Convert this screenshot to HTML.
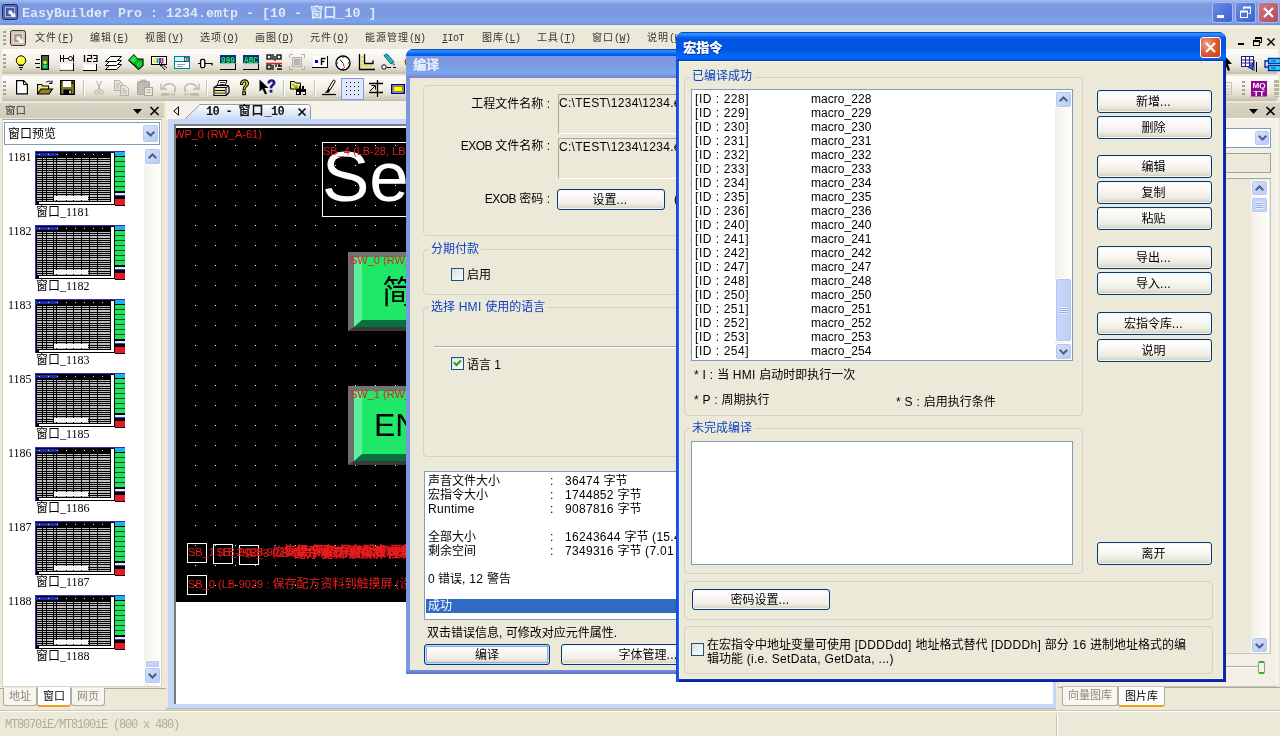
<!DOCTYPE html>
<html lang="zh-CN">
<head>
<meta charset="utf-8">
<title>EasyBuilder Pro : 1234.emtp</title>
<style>
*{box-sizing:border-box;margin:0;padding:0}
html,body{width:1280px;height:736px;overflow:hidden;background:#ECE9D8}
body{will-change:transform;position:relative;font-family:"Liberation Sans","Noto Sans CJK SC",sans-serif;font-size:12px;color:#000;line-height:14px}
.a{position:absolute}
.sim{font-family:"Liberation Serif","Noto Sans CJK SC",serif}
.mono{font-family:"Liberation Mono","Noto Sans CJK SC",monospace}
svg{position:absolute;overflow:visible}
/* ---------- main title ---------- */
#title{left:0;top:0;width:1280px;height:26px;background:linear-gradient(#a3bcf0 0,#93aeec 2px,#7d9ae2 4px,#7b98e1 15px,#7ba2e7 19px,#7aa5e9 22px,#7a90df 24px,#7686d8 26px)}
#title .txt{left:22px;top:5px;font:bold 13.33px/18px "Liberation Mono","Noto Sans CJK SC",monospace;color:#dfe8fa;white-space:pre;letter-spacing:0}
.cap{width:21px;height:21px;border:1px solid #a8bcf0;border-radius:3px;top:2px}
/* ---------- menubar ---------- */
#menu{left:0;top:25px;width:1280px;height:25px;background:#ECE9D8}
#menu span{position:absolute;top:7px;white-space:pre;font:10px/14px "Liberation Mono","Noto Sans CJK SC",monospace;letter-spacing:1px;color:#333}
#menu span i{font-style:normal;letter-spacing:-.5px}
/* ---------- toolbars ---------- */
.tb{left:0;height:25px;background:linear-gradient(#fdfcfa 0,#f4f2ea 40%,#e6e3d5 70%,#d2cfbe 88%,#bebba9 100%);border-radius:0 0 3px 3px}
.grip{width:3px;height:15px;background:repeating-linear-gradient(#a6a392 0,#a6a392 2px,transparent 2px,transparent 4px)}
.sep{width:1px;height:17px;background:#c5c2b2;box-shadow:1px 0 0 #fff}
/* ---------- panels ---------- */
.phead{height:16px;background:linear-gradient(#d9d5c6,#d0ccbb);border-top:1px solid #e6e3d6}
.combo{background:#fff;border:1px solid #7f9db9}
.cbtn{width:17px;background:linear-gradient(135deg,#d9e3fb,#b6c8f5);border:1px solid #fff;border-radius:3px;box-shadow:0 0 0 1px #b7c9f3 inset}
.sbtn{width:17px;height:17px;background:linear-gradient(135deg,#d5e0fb,#b9caf6);border:1px solid #fff;border-radius:3px;box-shadow:0 0 0 1px #b4c6f2 inset}

/* ---------- left panel ---------- */
.th{width:90px;height:54px;background:#000;border-left:1px solid #3030b0;border-top:1px solid #3030b0}
.th .hd{left:0;top:1px;width:74px;height:3px;background:linear-gradient(90deg,#1a2ab0 0,#1a2ab0 22px,#000 22px);}
.th .hd:after{content:"";position:absolute;left:3px;top:1px;width:72px;height:1px;background:repeating-linear-gradient(90deg,#d0d8ff 0,#d0d8ff 1px,transparent 1px,transparent 9px)}
.th .g{left:1px;top:5px;width:73px;height:44px;background:
 linear-gradient(90deg,transparent 5px,#000 5px,#000 6px,transparent 6px,transparent 9px,#000 9px,#000 10px,transparent 10px,transparent 16px,#000 16px,#000 17px,transparent 17px,transparent 19px,#000 19px,#000 20px,transparent 20px,transparent 29px,#000 29px,#000 30px,transparent 30px,transparent 36px,#000 36px,#000 37px,transparent 37px,transparent 44px,#000 44px,#000 45px,transparent 45px,transparent 52px,#000 52px,#000 53px,transparent 53px,transparent 60px,#000 60px,#000 61px,transparent 61px,transparent 73px,#000 73px),
 repeating-linear-gradient(#000 0,#000 1px,#bdbdbd 1px,#bdbdbd 2.200px)}
.th .hl{left:18px;top:44px;width:34px;height:4px;background:#f4f4f4;border:1px solid #fff}
.th .vs{left:75px;top:1px;width:3px;height:51px;background:#fff}
.th .hs{left:3px;top:50px;width:73px;height:2px;background:#fff}
.th .rc{left:79px;top:0;width:10px;height:54px;background:#000}
.th .rc i{position:absolute;left:0;width:10px}
.lnum{left:8px;margin-top:-1px;font:12px/12px "Liberation Serif","Noto Sans CJK SC",serif}
.llab{left:36px;margin-top:-1px;font:12px/13px "Liberation Serif","Noto Sans CJK SC",serif;white-space:pre}

/* ---------- MDI ---------- */
.red{color:#e81c1c;font:11px/13px "Liberation Sans","Noto Sans CJK SC",sans-serif;white-space:pre}
.gbtn{width:80px;height:79px;background:#1fe868;border-style:solid;border-width:5px 0 4px 6px;border-color:#747474 #747474 #3a3a3a #6e6e6e}
.gbtn:before{content:"";position:absolute;left:0;top:0;right:0;bottom:0;border-left:8px solid #5cf09c;border-bottom:7px solid #0a7040}
.red b{font-weight:normal;font-size:12px}
.sbx{width:20px;height:20px;border:1px solid #fff}

/* ---------- dialogs ---------- */
.dlg{background:#ece9d8}
.gb{border:1px solid #d4d2c2;border-radius:4px}
.gl{color:#0a3ec4;background:#ece9d8;padding:0 2px;white-space:pre;font-size:12px;line-height:14px}
.btn{padding:1px 2px 0 0;height:23px;border:1px solid #003c74;border-radius:3px;background:linear-gradient(#fff 0,#f8f7f3 40%,#efede4 72%,#dedacc 90%,#cbc7b8 100%);text-align:center;font-size:12px;line-height:21px;white-space:pre;box-shadow:0 0 0 1px #f4f3ee inset}
.btn.def{box-shadow:0 0 0 1px #c4d9fa inset,0 0 0 2px #8fb0ea inset}
.chk{width:13px;height:13px;border:1px solid #1c5180;background:linear-gradient(135deg,#dcdcd7,#fff)}
.lb{background:#fff;border:1px solid #7f9db9}
.t{white-space:pre;font-size:12px;line-height:14px}
.l{letter-spacing:.3px}
.l.id{letter-spacing:.55px}
.l.m{letter-spacing:.05px}
.sunk{border:1px solid;border-color:#aca899 #fff #fff #aca899;background:#ece9d8}
</style>
</head>
<body>

<!-- ================= MAIN TITLE BAR ================= -->
<div class="a" id="title">
  <svg style="left:2px;top:4px" width="16" height="16" viewBox="0 0 16 16"><rect x=".5" y=".5" width="15" height="15" rx="2" fill="#5a6cb4" stroke="#1a2a6c"/><rect x="3.500" y="3.500" width="9" height="9" fill="#46589e" stroke="#a4b0de"/><path d="M6.500 6.500h3.500v1.500l3.500 2.500v2.500h-3.500l-2-3h-1.500z" fill="#eef1fb"/></svg>
  <div class="a txt">EasyBuilder Pro : 1234.emtp - [10 - 窗口_10 ]</div>
  <div class="a cap" style="left:1212px;background:linear-gradient(135deg,#6a8ce6,#3c62cc)"><i class="a" style="left:4px;top:12px;width:7px;height:3px;background:#fff"></i></div>
  <div class="a cap" style="left:1235px;background:linear-gradient(135deg,#6a8ce6,#3c62cc)">
    <svg style="left:3px;top:3px" width="13" height="13" viewBox="0 0 13 13" fill="none" stroke="#fff"><path d="M4.5 3.5v-2h7v6h-2" stroke-width="1"/><path d="M4 1.5h8" stroke-width="2"/><rect x="1.5" y="5.500" width="7" height="6"/><path d="M1 5.500h8" stroke-width="2"/></svg></div>
  <div class="a cap" style="left:1258px;background:linear-gradient(135deg,#d07888,#b04a60)">
    <svg style="left:4px;top:4px" width="11" height="11" viewBox="0 0 11 11" stroke="#fff" stroke-width="2.2"><path d="M1 1l9 9M10 1l-9 9"/></svg></div>
</div>

<!-- ================= MENU BAR ================= -->
<div class="a" id="menu"><i class="a" style="left:0;top:1px;width:1280px;height:2px;background:#f2f1e6"></i>
  <div class="a grip" style="left:3px;top:6px"></div>
  <svg style="left:10px;top:5px" width="16" height="16" viewBox="0 0 16 16"><rect x=".5" y=".5" width="15" height="15" rx="2" fill="#cdc2b6" stroke="#3e3028"/><rect x="3.500" y="3.500" width="9" height="9" fill="#a89a90" stroke="#e6ded6"/><path d="M6.500 6.500h3.500v1.500l3.500 2.500v2.500h-3.500l-2-3h-1.500z" fill="#f6f2ee"/></svg>
  <span style="left:35px">文件<i>(<u>F</u>)</i></span>
  <span style="left:90px">编辑<i>(<u>E</u>)</i></span>
  <span style="left:145px">视图<i>(<u>V</u>)</i></span>
  <span style="left:200px">选项<i>(<u>O</u>)</i></span>
  <span style="left:255px">画图<i>(<u>D</u>)</i></span>
  <span style="left:310px">元件<i>(<u>O</u>)</i></span>
  <span style="left:365px">能源管理<i>(<u>N</u>)</i></span>
  <span style="left:442px"><i><u>I</u>IoT</i></span>
  <span style="left:482px">图库<i>(<u>L</u>)</i></span>
  <span style="left:537px">工具<i>(<u>T</u>)</i></span>
  <span style="left:592px">窗口<i>(<u>W</u>)</i></span>
  <span style="left:647px">说明<i>(<u>H</u>)</i></span>
  <!-- MDI child controls -->
  <i class="a" style="left:1238px;top:18px;width:6px;height:2px;background:#000"></i>
  <svg style="left:1253px;top:12px" width="9" height="9" viewBox="0 0 9 9" fill="none" stroke="#000"><path d="M2.500 2.500v-2h6v5h-2"/><path d="M2 1h7" stroke-width="2"/><rect x=".5" y="3.500" width="6" height="5"/><path d="M0 4h7" stroke-width="2"/></svg>
  <svg style="left:1267px;top:13px" width="8" height="8" viewBox="0 0 8 8" stroke="#000" stroke-width="1.500"><path d="M.5.5l7 7M7.500.5l-7 7"/></svg>
</div>

<!-- ================= TOOLBAR 1 ================= -->
<div class="a tb" id="tb1" style="top:49px;width:1278px">
  <div class="a grip" style="left:3px;top:5px"></div>
  <!-- bulb -->
  <svg style="left:13px;top:6px" width="16" height="16" viewBox="0 0 16 16"><circle cx="8" cy="5.500" r="4.700" fill="#ffff30" stroke="#000" stroke-width="1"/><path d="M5.500 10.500h5M6 12.500h4M7 14.300h2" stroke="#000" fill="none"/><circle cx="6.500" cy="4" r="1.300" fill="#ffffc0"/></svg>
  <!-- traffic -->
  <svg style="left:35px;top:6px" width="16" height="16" viewBox="0 0 16 16"><rect x="6.500" y=".5" width="7" height="14" fill="#008040" stroke="#000"/><circle cx="10" cy="3.500" r="1.800" fill="#e02010"/><circle cx="10" cy="7.500" r="1.800" fill="#ffe020"/><circle cx="10" cy="11.500" r="1.800" fill="#30e060"/><path d="M1 4.500h4M0 8.500h5M1 12.500h4" stroke="#000"/></svg>
  <!-- HHO -->
  <svg style="left:59px;top:6px" width="16" height="16" viewBox="0 0 16 16"><path d="M1.500 8.500v7h13v-7" fill="#fff" stroke="none"/><path d="M1 15.500h14M14.500 8v8" stroke="#000"/><path d="M2 15h12" stroke="#c8c4b4" /><path d="M1.500 0v7M4.500 0v7M1.500 3.500h12M9 1.500h0" stroke="#000" fill="none"/><circle cx="11.500" cy="3.500" r="2" fill="#fff" stroke="#000"/><path d="M14.500 0v7" stroke="#000"/></svg>
  <!-- 123 -->
  <svg style="left:82px;top:6px" width="16" height="16" viewBox="0 0 16 16"><path d="M1.500 9.500v6h13v-6" fill="#fff"/><path d="M1 15.500h14M14.500 9v7" stroke="#000"/><path d="M2.500 0v7" stroke="#000" stroke-width="1.300"/><path d="M5.500 .5h4v3h-4v3h4M11 .5h4v6h-4M12 3.500h3" stroke="#000" fill="none" stroke-width="1.200"/></svg>
  <!-- layers -->
  <svg style="left:105px;top:6px" width="17" height="16" viewBox="0 0 17 16" fill="#fff" stroke="#000" stroke-width="1"><path d="M5.500 9.500h11l-5 5H.5z"/><path d="M5.500 5.500h11l-5 5H.5z"/><path d="M5.500 1.500h11l-5 5H.5z"/></svg>
  <!-- green box -->
  <svg style="left:128px;top:5px" width="17" height="17" viewBox="0 0 17 17"><path d="M.8 6.200L5.800 .8l3.500 4 5.700 .4v6.200l-4.400 4z" fill="#08d828" stroke="#000" stroke-width="1.200" stroke-linejoin="round"/><path d="M9.300 4.800L6.300 9M6.300 9l4.400 6M6.300 9l8.500-3.500" stroke="#067a18" stroke-width=".9" fill="none"/><path d="M.8 6.200L5.800 .8l3.500 4-3 4.200z" fill="#30f050" stroke="none" opacity=".7"/></svg>
  <!-- palette -->
  <svg style="left:151px;top:6px" width="17" height="16" viewBox="0 0 17 16"><rect x=".5" y="1.500" width="15" height="8" fill="#fff" stroke="#000"/><rect x="2" y="3" width="3" height="5" fill="#f0f060"/><rect x="5.500" y="3" width="2" height="5" fill="#40a040"/><rect x="8" y="3" width="2" height="5" fill="#4040d0"/><rect x="10.500" y="3" width="2" height="5" fill="#d03030"/><path d="M8 8l6 7M10 8l6 5M9 11l5-2" stroke="#000" fill="none"/></svg>
  <!-- window -->
  <svg style="left:174px;top:6px" width="17" height="16" viewBox="0 0 17 16"><rect x=".5" y="1.500" width="15" height="12" fill="#fff" stroke="#0080a0"/><path d="M1 6.500h15" stroke="#0080a0"/><rect x="1" y="2" width="9" height="4" fill="#d8f0f8"/><rect x="10.500" y="2.500" width="4" height="3.500" fill="#fff" stroke="#000" stroke-width=".6"/><path d="M11.500 3.500h2.500l-1.250 1.800z" fill="#000"/><path d="M3 9.500h8M3 11.500h6" stroke="#80a8b8"/></svg>
  <!-- dumbbell -->
  <svg style="left:197px;top:6px" width="17" height="16" viewBox="0 0 17 16"><path d="M1 8.500h2.500M8 8.500h7.500M15 8v2.500" stroke="#000" stroke-width="1.200"/><rect x="3.600" y="4.300" width="4.200" height="8.400" rx="1.500" fill="#fff" stroke="#000" stroke-width="1.300"/></svg>
  <!-- 999 -->
  <svg style="left:220px;top:5px" width="17" height="17" viewBox="0 0 17 17"><rect x="0" y="1" width="16" height="8.500" fill="#0030b0"/><rect x="1" y="2" width="14" height="7" fill="#003858"/><text x="8" y="8.500" font-family="Liberation Mono,monospace" font-weight="bold" font-size="9" fill="#28e860" text-anchor="middle" textLength="14" lengthAdjust="spacingAndGlyphs">999</text><rect x="0" y="9.500" width="16" height="6" fill="#dedcd2"/><path d="M0 15.500h16M15.500 9.500v6.500" stroke="#000"/></svg>
  <!-- ABC -->
  <svg style="left:243px;top:5px" width="17" height="17" viewBox="0 0 17 17"><rect x="0" y="1" width="16" height="8.500" fill="#0030b0"/><rect x="1" y="2" width="14" height="7" fill="#003858"/><text x="8" y="8.500" font-family="Liberation Mono,monospace" font-weight="bold" font-size="9" fill="#28e860" text-anchor="middle" textLength="14" lengthAdjust="spacingAndGlyphs">ABC</text><rect x="0" y="9.500" width="16" height="6" fill="#dedcd2"/><path d="M0 15.500h16M15.500 9.500v6.500" stroke="#000"/></svg>
  <!-- barcode -->
  <svg style="left:266px;top:5px" width="17" height="17" viewBox="0 0 17 17"><g fill="none" stroke="#000" stroke-width="1.300"><rect x="1" y="1" width="4" height="4"/><rect x="11" y="1" width="4" height="4"/><rect x="1" y="11" width="4" height="4"/><path d="M7 0v6M9 2v5M7 11v5M10 10v3M12 12h4M11 15h5M13 9v3"/></g><path d="M0 9.500h16" stroke="#e02020" stroke-width="1.600"/></svg>
  <!-- gray frame -->
  <svg style="left:289px;top:5px" width="17" height="17" viewBox="0 0 17 17" fill="none" stroke="#b0b0a8"><path d="M.5 4V.5H4M12 .5h3.500V4M15.500 12v3.500H12M4 15.500H.5V12"/><rect x="3.500" y="3.500" width="9" height="9" fill="#e0e0d8"/><rect x="5.500" y="5.500" width="5" height="5" fill="#b8b8b0"/></svg>
  <!-- .F -->
  <svg style="left:312px;top:6px" width="17" height="16" viewBox="0 0 17 16"><rect x="1" y="1" width="14" height="11" fill="#fff"/><path d="M0 12.500h16M15.500 1v12" stroke="#000"/><rect x="3" y="5" width="3" height="3" fill="#0000e0"/><path d="M9.500 10V3.500h4M9.500 6.500h3" stroke="#000" stroke-width="1.400" fill="none"/></svg>
  <!-- clock -->
  <svg style="left:335px;top:6px" width="16" height="16" viewBox="0 0 16 16"><circle cx="8" cy="8" r="7" fill="#fff" stroke="#000" stroke-width="1.300"/><path d="M8 2v1M8 13v1M2 8h1M13 8h1" stroke="#000"/><path d="M8 8L5 4.500" stroke="#000"/><path d="M8 8l1.500 5" stroke="#e02020"/></svg>
  <!-- L chart -->
  <svg style="left:358px;top:5px" width="17" height="17" viewBox="0 0 17 17"><path d="M1.500 0v15.500H17M6.500 0v9.500H15v-3" stroke="#000" fill="none" stroke-width="1.300"/><g fill="#e0e020"><rect x="3" y="2" width="2.500" height="2.500"/><rect x="3" y="6" width="2.500" height="2.500"/><rect x="3" y="10" width="2.500" height="2.500"/><rect x="7" y="11" width="2.500" height="2.500"/><rect x="11" y="11" width="2.500" height="2.500"/></g></svg>
  <!-- pen -->
  <svg style="left:381px;top:5px" width="17" height="17" viewBox="0 0 17 17"><path d="M3 1.500l3-1.500 7 8-3 2z" fill="#20c0c0" stroke="#006080"/><path d="M11 9l3 1-1 2z" fill="#4060e0"/><circle cx="3" cy="13" r="2.200" fill="#fff" stroke="#000"/><path d="M6 13.500h4M12 13.500h3" stroke="#000"/></svg>
  <svg style="left:404px;top:8px" width="10" height="10" viewBox="0 0 10 10"><circle cx="5" cy="5" r="4" fill="#ffb020" stroke="#804000"/></svg>
  <!-- right side (past macro dialog) -->
  <svg style="left:1219px;top:7px" width="14" height="16" viewBox="0 0 14 16"><path d="M6 0l7 8h-4l2 6-2 1-2.500-6-3 3z" fill="#000"/></svg>
  <svg style="left:1241px;top:7px" width="17" height="17" viewBox="0 0 17 17"><rect x=".5" y=".5" width="12" height="10" fill="#fff" stroke="#202080"/><path d="M1 4h11M1 7h11M4.500 1v9M8.500 1v9" stroke="#202080"/><path d="M13 4v11M12 14l-5-3 5-4z" fill="#4060d0" stroke="#202080"/><path d="M15.500 6v10" stroke="#000"/></svg>
  <svg style="left:1264px;top:8px" width="18" height="16" viewBox="0 0 18 16"><rect x="4.500" y="1.500" width="12" height="5" fill="#30e0e0" stroke="#0030c0" stroke-width="1.400"/><rect x="4.500" y="8.500" width="12" height="5" fill="#30e0e0" stroke="#0030c0" stroke-width="1.400"/><path d="M1 3v8M1 4h4M1 10h4" stroke="#0030c0" stroke-width="1.400" fill="none"/><path d="M7 4h5M7 11h5" stroke="#0030c0"/></svg>
</div>
<!-- ================= TOOLBAR 2 ================= -->
<div class="a tb" id="tb2" style="top:76px;width:1278px">
  <div class="a grip" style="left:3px;top:5px"></div>
  <!-- new -->
  <svg style="left:16px;top:4px" width="12" height="15" viewBox="0 0 12 15"><path d="M.6 .6h7l3.800 3.800v9.500H.6z" fill="#fff" stroke="#000" stroke-width="1.200"/><path d="M7.500 .6v4h4" fill="none" stroke="#000"/></svg>
  <!-- open -->
  <svg style="left:37px;top:4px" width="17" height="15" viewBox="0 0 17 15"><path d="M.6 14V4.500h4l1 1.500h6v3" fill="#f0e890" stroke="#000" stroke-width="1.100"/><path d="M.6 14l3.400-5h11.500l-3.500 5z" fill="#908820" stroke="#000" stroke-width="1.100"/><path d="M9 2.500c2-2 4.500-1.500 5.500 .5M15 0.500v3h-3" fill="none" stroke="#000"/></svg>
  <!-- save -->
  <svg style="left:60px;top:4px" width="15" height="15" viewBox="0 0 15 15"><rect x=".6" y=".6" width="13.800" height="13.800" fill="#807820" stroke="#000" stroke-width="1.200"/><rect x="3" y="1" width="8" height="6" fill="#fff"/><rect x="3.500" y="9.500" width="8" height="5" fill="#000"/><rect x="9" y="10.500" width="2" height="3" fill="#c0c0c0"/><rect x="11.500" y="2" width="1.500" height="2" fill="#000"/></svg>
  <div class="a sep" style="left:83px;top:4px"></div>
  <!-- cut -->
  <svg style="left:94px;top:5px" width="10" height="14" viewBox="0 0 10 14" fill="none" stroke="#b4b1a4" stroke-width="1"><path d="M2.500 0l4 9.500M7.500 0l-4 9.500"/><circle cx="2.500" cy="11.300" r="1.900"/><circle cx="7.500" cy="11.300" r="1.900"/></svg>
  <!-- copy -->
  <svg style="left:114px;top:4px" width="16" height="16" viewBox="0 0 16 16" fill="#e8e6da" stroke="#b4b1a4"><path d="M.5 .5h5l2.500 2.500v7.500h-7.500z"/><path d="M6.500 5.500h5l3 3v7h-8z"/><path d="M2 4h4M2 6h3M2 8h3M8 9h3M8 11h5M8 13h5" stroke-width=".9"/></svg>
  <!-- paste -->
  <svg style="left:137px;top:3px" width="16" height="17" viewBox="0 0 16 17"><rect x=".5" y="2.500" width="12" height="13" rx="1" fill="#c0bdb0" stroke="#aaa79a"/><rect x="3.500" y=".5" width="6" height="4" rx="1" fill="#b4b1a4"/><rect x="7.500" y="8.500" width="8" height="8" fill="#ece9d8" stroke="#aaa79a"/><path d="M9 11h5M9 13.500h5" stroke="#b4b1a4"/></svg>
  <!-- undo -->
  <svg style="left:160px;top:5px" width="17" height="15" viewBox="0 0 17 15" fill="none" stroke="#b8b5a8" stroke-width="1.300"><path d="M3 7c2-5 9-6 12-1 1 2 0 4-1 5"/><path d="M1 2.500v5.500h5.500"/><path d="M1 13.300h8.500M11 13.300h1.500M13.500 13.300h1.500" stroke-width="2.200"/></svg>
  <!-- redo -->
  <svg style="left:183px;top:5px" width="17" height="15" viewBox="0 0 17 15" fill="none" stroke="#b8b5a8" stroke-width="1.300"><path d="M14 7c-2-5-9-6-12-1-1 2 0 4 1 5"/><path d="M16 2.500v5.500h-5.500"/><path d="M7 13.300h9M1.500 13.300h1.500M4 13.300h1.500" stroke-width="2.200"/></svg>
  <div class="a sep" style="left:206px;top:4px"></div>
  <!-- print -->
  <svg style="left:213px;top:4px" width="17" height="16" viewBox="0 0 17 16"><path d="M4 6l2-5.500h8l-2 5.500z" fill="#fff" stroke="#000"/><path d="M7 2.500h5M6.500 4.500h5" stroke="#000" stroke-width=".8"/><path d="M1 7.500l3-2h11l1 2v5l-3 3H1z" fill="#e8e8e8" stroke="#000" stroke-width="1.200"/><path d="M1 7.500h12l3-1.500M13 7.500v8" stroke="#000" fill="none"/><path d="M2 10.500h10M2 13h10" stroke="#000"/><rect x="3" y="11" width="8" height="1.500" fill="#f0f040"/></svg>
  <!-- ? -->
  <svg style="left:239px;top:3px" width="11" height="17" viewBox="0 0 11 17"><path d="M1.500 5.500c0-6 8-6 8-1 0 3-3.500 3-3.500 6.500h-2c0-4.500 3-4.500 3-6.500 0-2.500-3.500-2-3.500 1z" fill="#ffff20" stroke="#000" stroke-width="1.100"/><rect x="3.800" y="12.800" width="2.600" height="2.800" fill="#ffff20" stroke="#000" stroke-width="1.100"/></svg>
  <!-- arrow? -->
  <svg style="left:259px;top:3px" width="17" height="17" viewBox="0 0 17 17"><path d="M.5 .5v12l3-2.500 2.500 5.500 2-1-2.500-5.500h4z" fill="#000"/><path d="M8.300 4.500c0-5.500 8.200-5.500 8.200-.8 0 3-3.200 2.800-3.200 5.600h-2.600c0-4 3-3.800 3-5.600 0-1.600-2.600-1.400-2.600 .8z" fill="#1c1c88"/><rect x="10.600" y="10.800" width="2.800" height="2.800" fill="#1c1c88"/></svg>
  <div class="a sep" style="left:283px;top:4px"></div>
  <!-- binoculars -->
  <svg style="left:290px;top:4px" width="17" height="17" viewBox="0 0 17 17"><path d="M.5 1.500h4l1 1.500h5v6H.5z" fill="#f0e860" stroke="#000"/><path d="M2 4l5 4M7 5v3H4" stroke="#808020" fill="none"/><path d="M6 9h3v-3h2v3h1v-3h2v3h2v6h-3v-3h-2v3H6z" fill="#000"/><rect x="7" y="12" width="2" height="2" fill="#fff"/><rect x="13" y="12" width="2" height="2" fill="#fff"/></svg>
  <div class="a sep" style="left:314px;top:4px"></div>
  <!-- brush -->
  <svg style="left:322px;top:4px" width="16" height="16" viewBox="0 0 16 16"><path d="M0 14.500h14" stroke="#000" stroke-width="1.300"/><path d="M11 .5c1-1 2.500 0 2 1.500l-5 8-2-1z" fill="#fff" stroke="#000"/><path d="M6 9l2 1-1 2.500-4 .5z" fill="#000"/></svg>
  <!-- grid toggle -->
  <div class="a" style="left:341px;top:2px;width:23px;height:22px;background:#dfe6f8;border:1px solid #7f9ddc"></div>
  <div class="a" style="left:346px;top:6px;width:14px;height:14px;background:radial-gradient(circle at .5px .5px,#000 .6px,transparent .95px) 0 0/4px 4px"></div>
  <!-- align -->
  <svg style="left:368px;top:4px" width="16" height="17" viewBox="0 0 16 17" fill="none" stroke="#000"><path d="M1 3.500h14M1 12.500h14M9.500 0v17" stroke-width="1.300"/><path d="M2 11l5-5M3.500 5.500h4v4"/></svg>
  <!-- yellow rect -->
  <svg style="left:391px;top:8px" width="14" height="10" viewBox="0 0 16 12" preserveAspectRatio="none"><rect x=".8" y=".8" width="14.400" height="10.400" fill="#c8c8c8" stroke="#000080" stroke-width="1.600"/><rect x="3" y="3" width="10" height="6" fill="#ffff00" stroke="#808000"/></svg>
  <!-- right side -->
  <svg style="left:1222px;top:6px" width="12" height="14" viewBox="0 0 12 14" fill="none" stroke="#c4c1b2"><rect x=".5" y=".5" width="9" height="12"/><path d="M2 4h6M2 7h6M2 10h6"/></svg>
  <div class="a grip" style="left:1242px;top:5px"></div>
  <svg style="left:1251px;top:5px" width="17" height="16" viewBox="0 0 17 16"><rect x="0" y="0" width="16" height="15.500" fill="#900890"/><text x="8" y="7" font-family="Liberation Sans,sans-serif" font-weight="bold" font-size="7.500" fill="#fff" text-anchor="middle" textLength="13" lengthAdjust="spacingAndGlyphs">MQ</text><text x="8" y="14.500" font-family="Liberation Sans,sans-serif" font-weight="bold" font-size="7.500" fill="#fff" text-anchor="middle" textLength="11" lengthAdjust="spacingAndGlyphs">TT</text></svg>
  <div class="a" style="left:1274px;top:4px;width:5px;height:17px;background:repeating-linear-gradient(#b8b4a0 0,#b8b4a0 3px,transparent 3px,transparent 4px)"></div>
</div>

<i class="a" style="left:0;top:49px;width:2px;height:53px;background:#ECE9D8"></i>
<!-- ================= LEFT PANEL ================= -->
<div class="a" id="left" style="left:0;top:101px;width:166px;height:609px">
  <div class="a phead" style="left:0;top:1px;width:164px"><span class="a sim" style="left:5px;top:2px;font-size:10.500px;line-height:12px;color:#333">窗口</span>
    <svg style="left:133px;top:6px" width="9" height="5" viewBox="0 0 9 5"><path d="M0 0h9L4.500 5z" fill="#000"/></svg>
    <svg style="left:150px;top:4px" width="9" height="8" viewBox="0 0 9 8" stroke="#000" stroke-width="1.600"><path d="M.5 0l8 8M8.500 0l-8 8"/></svg></div>
  <div class="a" style="left:2px;top:18px;width:160px;height:568px;background:#fff;border:1px solid #d8d4c4;border-top-color:#aca899"></div>
  <div class="a combo" style="left:4px;top:21px;width:156px;height:23px"><span class="a sim" style="left:3px;top:4px;font-size:12px;line-height:14px">窗口预览</span><div class="a cbtn" style="left:137px;top:1px;height:19px"><svg style="left:3px;top:6px" width="9" height="6" viewBox="0 0 9 6" fill="none" stroke="#4d6185" stroke-width="2"><path d="M.7 .7l3.800 3.800L8.300 .7"/></svg></div></div>
  <div class="a" style="left:144px;top:47px;width:17px;height:538px;background:linear-gradient(90deg,#f3f1ec,#fefefb)"></div>
  <div class="a sbtn" style="left:144px;top:47px"><svg style="left:3px;top:4px" width="9" height="6" viewBox="0 0 9 6" fill="none" stroke="#4d6185" stroke-width="2"><path d="M.7 5.300L4.500 1.500 8.300 5.300"/></svg></div>
  <div class="a" style="left:145px;top:559px;width:15px;height:8px;background:#c3d3fb;border:1px solid #fff;border-radius:2px;box-shadow:0 0 0 1px #b4c6f2 inset"></div>
  <div class="a sbtn" style="left:144px;top:566px"><svg style="left:3px;top:5px" width="9" height="6" viewBox="0 0 9 6" fill="none" stroke="#4d6185" stroke-width="2"><path d="M.7 .7l3.800 3.800L8.300 .7"/></svg></div>
  <div class="a lnum" style="top:51px">1181</div>
  <div class="a th" style="left:35px;top:50px"><i class="a hd"></i><i class="a g"></i><i class="a hl"></i><i class="a vs"></i><i class="a hs"></i><div class="a rc"><i style="top:0;height:4px;background:#20b0e8"></i><i style="top:5px;height:34px;background:repeating-linear-gradient(#20e060 0,#20e060 4px,#0a5020 4px,#0a5020 5px)"></i><i style="top:41px;height:3px;background:#e8e8ff;border-bottom:1px solid #3040c0"></i><i style="top:47px;height:6px;background:#e81828"></i></div></div>
  <div class="a llab" style="top:106px">窗口_1181</div>
  <div class="a lnum" style="top:125px">1182</div>
  <div class="a th" style="left:35px;top:124px"><i class="a hd"></i><i class="a g"></i><i class="a hl"></i><i class="a vs"></i><i class="a hs"></i><div class="a rc"><i style="top:0;height:4px;background:#20b0e8"></i><i style="top:5px;height:34px;background:repeating-linear-gradient(#20e060 0,#20e060 4px,#0a5020 4px,#0a5020 5px)"></i><i style="top:41px;height:3px;background:#e8e8ff;border-bottom:1px solid #3040c0"></i><i style="top:47px;height:6px;background:#e81828"></i></div></div>
  <div class="a llab" style="top:180px">窗口_1182</div>
  <div class="a lnum" style="top:199px">1183</div>
  <div class="a th" style="left:35px;top:198px"><i class="a hd"></i><i class="a g"></i><i class="a hl"></i><i class="a vs"></i><i class="a hs"></i><div class="a rc"><i style="top:0;height:4px;background:#20b0e8"></i><i style="top:5px;height:34px;background:repeating-linear-gradient(#20e060 0,#20e060 4px,#0a5020 4px,#0a5020 5px)"></i><i style="top:41px;height:3px;background:#e8e8ff;border-bottom:1px solid #3040c0"></i><i style="top:47px;height:6px;background:#e81828"></i></div></div>
  <div class="a llab" style="top:254px">窗口_1183</div>
  <div class="a lnum" style="top:273px">1185</div>
  <div class="a th" style="left:35px;top:272px"><i class="a hd"></i><i class="a g"></i><i class="a hl"></i><i class="a vs"></i><i class="a hs"></i><div class="a rc"><i style="top:0;height:4px;background:#20b0e8"></i><i style="top:5px;height:34px;background:repeating-linear-gradient(#20e060 0,#20e060 4px,#0a5020 4px,#0a5020 5px)"></i><i style="top:41px;height:3px;background:#e8e8ff;border-bottom:1px solid #3040c0"></i><i style="top:47px;height:6px;background:#e81828"></i></div></div>
  <div class="a llab" style="top:328px">窗口_1185</div>
  <div class="a lnum" style="top:347px">1186</div>
  <div class="a th" style="left:35px;top:346px"><i class="a hd"></i><i class="a g"></i><i class="a hl"></i><i class="a vs"></i><i class="a hs"></i><div class="a rc"><i style="top:0;height:4px;background:#20b0e8"></i><i style="top:5px;height:34px;background:repeating-linear-gradient(#20e060 0,#20e060 4px,#0a5020 4px,#0a5020 5px)"></i><i style="top:41px;height:3px;background:#e8e8ff;border-bottom:1px solid #3040c0"></i><i style="top:47px;height:6px;background:#e81828"></i></div></div>
  <div class="a llab" style="top:402px">窗口_1186</div>
  <div class="a lnum" style="top:421px">1187</div>
  <div class="a th" style="left:35px;top:420px"><i class="a hd"></i><i class="a g"></i><i class="a hl"></i><i class="a vs"></i><i class="a hs"></i><div class="a rc"><i style="top:0;height:4px;background:#20b0e8"></i><i style="top:5px;height:34px;background:repeating-linear-gradient(#20e060 0,#20e060 4px,#0a5020 4px,#0a5020 5px)"></i><i style="top:41px;height:3px;background:#e8e8ff;border-bottom:1px solid #3040c0"></i><i style="top:47px;height:6px;background:#e81828"></i></div></div>
  <div class="a llab" style="top:476px">窗口_1187</div>
  <div class="a lnum" style="top:495px">1188</div>
  <div class="a th" style="left:35px;top:494px"><i class="a hd"></i><i class="a g"></i><i class="a hl"></i><i class="a vs"></i><i class="a hs"></i><div class="a rc"><i style="top:0;height:4px;background:#20b0e8"></i><i style="top:5px;height:34px;background:repeating-linear-gradient(#20e060 0,#20e060 4px,#0a5020 4px,#0a5020 5px)"></i><i style="top:41px;height:3px;background:#e8e8ff;border-bottom:1px solid #3040c0"></i><i style="top:47px;height:6px;background:#e81828"></i></div></div>
  <div class="a llab" style="top:550px">窗口_1188</div>
  <div class="a" style="left:0;top:587px;width:166px;height:1px;background:#aca899"></div>
  <div class="a sim" style="left:3px;top:587px;width:34px;height:18px;background:#f6f5ef;border:1px solid #b0ad9c;border-top:0;border-radius:0 0 3px 3px;font-size:11px;line-height:16px;text-align:center;color:#8a8778">地址</div>
  <div class="a sim" style="left:37px;top:586px;width:34px;height:20px;background:#fff;border:1px solid #b0ad9c;border-top:0;border-bottom:2px solid #f0a020;border-radius:0 0 3px 3px;font-size:11px;line-height:18px;text-align:center;color:#000">窗口</div>
  <div class="a sim" style="left:71px;top:587px;width:34px;height:18px;background:#f6f5ef;border:1px solid #b0ad9c;border-top:0;border-radius:0 0 3px 3px;font-size:11px;line-height:16px;text-align:center;color:#8a8778">网页</div>
</div>

<!-- ================= MDI AREA ================= -->
<div class="a" id="mdi" style="left:166px;top:101px;width:892px;height:609px">
  <div class="a" style="left:0;top:0;width:892px;height:19px;background:#f4f2ea"></div>
  <svg style="left:7px;top:5px" width="6" height="10" viewBox="0 0 6 10"><path d="M5.500 .8v8.400L.8 5z" fill="none" stroke="#000"/></svg>
  <!-- tab -->
  <div class="a" style="left:18px;top:3px;width:127px;height:16px;background:linear-gradient(#fff,#c8d8f6);clip-path:polygon(0 100%,16px 0,124px 0,127px 3px,127px 100%)"></div>
  <svg style="left:18px;top:3px" width="130" height="16" viewBox="0 0 130 16"><path d="M0 16L16 .5h107.500q3 0 3 3V16" fill="none" stroke="#9a9a9a" stroke-width="1"/></svg>
  <div class="a mono" style="left:40px;top:4px;font-size:12px;line-height:14px;font-weight:bold;white-space:pre;color:#111"><span style="letter-spacing:-.7px">10 - </span><span style="letter-spacing:1px">窗口</span><span style="letter-spacing:-.7px">_10</span></div>
  <svg style="left:132px;top:7px" width="8" height="8" viewBox="0 0 8 8" stroke="#000" stroke-width="1.500"><path d="M.5 .5l7 7M7.500 .5l-7 7"/></svg>
  <!-- frame -->
  <div class="a" style="left:2px;top:18px;width:888px;height:589px;background:#fff;border:6px solid #c6d6f6;border-right-width:4px;border-bottom-width:4px;box-shadow:0 0 0 1px #dfe8fb inset"></div>
  <div class="a" style="left:8px;top:23px;width:879px;height:580px;border-left:2px solid #7c7c7c;border-top:2px solid #7c7c7c;background:#fff"></div>
  <!-- canvas -->
  <div class="a" id="cv" style="left:10px;top:27px;width:800px;height:474px;background:#000;overflow:hidden">
    <div class="a" style="left:0;top:0;width:800px;height:476px;background:radial-gradient(circle at .5px .5px,#fff .55px,transparent .9px) 19px -3px/20px 20px"></div>
    <div class="a red" style="left:-2px;top:0">WP_0 (RW_A-61)</div>
    <div class="a" style="left:146px;top:14px;width:300px;height:75px;border:1px solid #fff"></div>
    <div class="a" style="left:146px;top:9px;font:71px/80px 'Liberation Sans',sans-serif;color:#fff;white-space:pre">Setting</div>
    <div class="a red" style="left:147px;top:17px">SB_4 (LB-28, LB-29)</div>
    <div class="a gbtn" style="left:172px;top:124px;width:180px"><span class="a" style="left:28px;top:13px;font:32px/44px 'Liberation Sans','Noto Sans CJK SC',sans-serif;white-space:pre">简体</span></div>
    <div class="a red" style="left:174px;top:126px">SW_0 (RW_A-0)</div>
    <div class="a gbtn" style="left:172px;top:258px;width:180px"><span class="a" style="left:20px;top:12px;font:32px/44px 'Liberation Sans',sans-serif;white-space:pre">ENG</span></div>
    <div class="a red" style="left:174px;top:260px">SW_1 (RW_A-0)</div>
    <div class="a sbx" style="left:11px;top:415px"></div>
    <div class="a sbx" style="left:37px;top:416px"></div>
    <div class="a sbx" style="left:63px;top:417px"></div>
    <div class="a sbx" style="left:11px;top:447px"></div>
    <div class="a red" style="left:12px;top:418px">SB_1 (LB-9028 : <b>恢复出厂配方资料</b> (<b>设</b>ON))</div>
    <div class="a red" style="left:40px;top:418px">SB_2 (LB-9030 : <b>更新配方资料到触摸屏</b> (<b>设</b>ON))</div>
    <div class="a red" style="left:66px;top:419px">SB_3 (LB-9031 : <b>保存配方资料到控制器</b> (<b>设</b>ON))</div>
    <div class="a red" style="left:108px;top:417px;font-size:12px;font-weight:bold">恢复 保存 保存配方 更新配方资料 触摸</div>
    <div class="a red" style="left:118px;top:420px;font-size:12px;font-weight:bold">配方 更新 触摸屏 控制器 保存资料 配方</div>
    <div class="a red" style="left:12px;top:450px">SB_0 (LB-9029 : <b>保存配方资料到触摸屏</b> (<b>设</b>ON))</div>
  </div>
</div>

<!-- ================= RIGHT PANEL ================= -->
<div class="a" id="right" style="left:1058px;top:101px;width:222px;height:609px">
  <div class="a phead" style="left:0;top:1px;width:222px">
    <svg style="left:191px;top:6px" width="9" height="5" viewBox="0 0 9 5"><path d="M0 0h9L4.500 5z" fill="#000"/></svg>
    <svg style="left:208px;top:4px" width="9" height="8" viewBox="0 0 9 8" stroke="#000" stroke-width="1.600"><path d="M.5 0l8 8M8.500 0l-8 8"/></svg></div>
  <div class="a" style="left:2px;top:17px;width:218px;height:569px;background:#f1efe6;border:1px solid #fbfaf6;border-bottom-color:#c9c6b6"></div>
  <div class="a combo" style="left:8px;top:27px;width:205px;height:20px"><div class="a cbtn" style="left:187px;top:1px;height:16px;width:16px"><svg style="left:3px;top:4px" width="9" height="6" viewBox="0 0 9 6" fill="none" stroke="#4d6185" stroke-width="2"><path d="M.7 .7l3.800 3.800L8.300 .7"/></svg></div></div>
  <div class="a" style="left:8px;top:52px;width:205px;height:20px;background:#ece9d8;border:1px solid #a5a294"></div>
  <div class="a" style="left:8px;top:77px;width:205px;height:476px;background:#ece9d8;border:1px solid #c9c6b6;border-top-color:#aaa799"></div>
  <div class="a" style="left:193px;top:79px;width:18px;height:473px;background:linear-gradient(90deg,#f1efe8,#fefefc)"></div>
  <div class="a sbtn" style="left:193px;top:79px;height:16px"><svg style="left:3px;top:4px" width="9" height="6" viewBox="0 0 9 6" fill="none" stroke="#4d6185" stroke-width="2"><path d="M.7 5.300L4.500 1.500 8.300 5.300"/></svg></div>
  <div class="a sbtn" style="left:193px;top:96px;height:16px;background:#c4d4fb"><i class="a" style="left:4px;top:4px;width:7px;height:7px;background:repeating-linear-gradient(#eef3ff 0,#eef3ff 1px,#8da7e8 1px,#8da7e8 2px)"></i></div>
  <div class="a sbtn" style="left:193px;top:536px;height:16px"><svg style="left:3px;top:5px" width="9" height="6" viewBox="0 0 9 6" fill="none" stroke="#4d6185" stroke-width="2"><path d="M.7 .7l3.800 3.800L8.300 .7"/></svg></div>
  <div class="a" style="left:100px;top:565px;width:106px;height:2px;background:#aaa799;border-bottom:1px solid #fff"></div>
  <div class="a" style="left:200px;top:560px;width:7px;height:13px;background:#f4f4ee;border:1px solid #8aa08a;border-top:2px solid #28b428;border-bottom:2px solid #28b428;border-radius:2px"></div>
  <div class="a" style="left:0;top:586px;width:222px;height:1px;background:#aca899"></div>
  <div class="a sim" style="left:4px;top:586px;width:56px;height:19px;background:#f8f7f2;border:1px solid #b0ad9c;border-top:0;border-radius:0 0 3px 3px;font-size:11px;line-height:17px;text-align:center;color:#8a8778">向量图库</div>
  <div class="a sim" style="left:60px;top:586px;width:47px;height:20px;background:#fff;border:1px solid #b0ad9c;border-top:0;border-bottom:2px solid #f0a020;border-radius:0 0 3px 3px;font-size:11px;line-height:18px;text-align:center;color:#000">图片库</div>
</div>

<i class="a" style="left:166px;top:708px;width:890px;height:2px;background:linear-gradient(#b9b7a9,#d8d5c6)"></i>
<!-- ================= STATUS BAR ================= -->
<div class="a" id="status" style="left:0;top:710px;width:1280px;height:26px;border-top:1px solid #c9c6b6;box-shadow:0 1px 0 #fff inset">
  <div class="a mono" style="left:5px;top:8px;font-size:12px;line-height:13px;letter-spacing:-1.2px;color:#b0ad9e;white-space:pre">MT8070iE/MT8100iE (800 x 480)</div>
  <i class="a" style="left:1056px;top:3px;width:1px;height:22px;background:#c9c6b6;box-shadow:1px 0 0 #fff"></i>
</div>

<!-- ================= COMPILE DIALOG ================= -->
<div class="a" id="dlg1" style="left:406px;top:49px;width:540px;height:625px;background:#7b97e0;border-radius:7px 7px 0 0">
  <div class="a" style="left:0;top:0;width:540px;height:29px;border-radius:7px 7px 0 0;background:linear-gradient(#0a50c8 0,#0a50c8 .8px,#2f8dff 1.500px,#2480f8 3px,#0a62ea 5px,#0058e6 6.800px,#7b98e2 7.200px,#7b98e1 14px,#7ba0e6 19px,#7ba8ec 24px,#7a98e2 26px,#7a86d8 27.500px,#7a86d8 29px)"></div>
  <div class="a" style="left:7px;top:8px;font-weight:bold;font-size:13px;line-height:15px;color:#e4ebfa;white-space:pre;text-shadow:.4px 0 0 #e4ebfa">编译</div>
  <div class="a" style="left:0;top:621px;width:540px;height:4px;background:linear-gradient(#7590de,#5d72d2)"></div>
  <div class="a dlg" style="left:4px;top:29px;width:532px;height:592px">
    <!-- coordinates here are relative to (410,78) -->
    <div class="a gb" style="left:13px;top:7px;width:500px;height:151px"></div>
    <div class="a t" style="left:19px;top:19px;width:121px;text-align:right">工程文件名称 :</div>
    <div class="a sunk" style="left:148px;top:16px;width:329px;height:40px"><span class="a t" style="left:0;top:1px"><span class="l">C:\TEST\1234\1234.emtp</span></span></div>
    <div class="a t" style="left:19px;top:61px;width:121px;text-align:right"><span style="letter-spacing:-.5px">EXOB</span> 文件名称 :</div>
    <div class="a sunk" style="left:148px;top:60px;width:329px;height:41px"><span class="a t" style="left:0;top:1px"><span class="l">C:\TEST\1234\1234.exob</span></span></div>
    <div class="a t" style="left:19px;top:114px;width:121px;text-align:right"><span style="letter-spacing:-.5px">EXOB</span> 密码 :</div>
    <div class="a btn" style="left:147px;top:111px;width:108px;height:21px;line-height:18px">设置<span class="l">...</span></div>
    <div class="a t" style="left:264px;top:114px">(如果使用反编译功能必须设置密码)</div>

    <div class="a gb" style="left:13px;top:171px;width:500px;height:46px"></div>
    <div class="a gl" style="left:19px;top:164px">分期付款</div>
    <div class="a chk" style="left:41px;top:190px"></div>
    <div class="a t" style="left:57px;top:190px">启用</div>

    <div class="a gb" style="left:13px;top:229px;width:500px;height:150px"></div>
    <div class="a gl" style="left:19px;top:222px">选择<span class="l"> HMI </span>使用的语言</div>
    <div class="a" style="left:24px;top:268px;width:480px;height:1px;background:#aca899;border-bottom:1px solid #fff;box-sizing:content-box"></div>
    <div class="a chk" style="left:41px;top:279px"><svg style="left:1px;top:1px" width="9" height="9" viewBox="0 0 9 9"><path d="M1 3.500l2.500 2.500L8 1.500" fill="none" stroke="#21a121" stroke-width="2"/></svg></div>
    <div class="a t" style="left:57px;top:280px">语言 1</div>

    <div class="a lb" style="left:14px;top:393px;width:499px;height:149px">
      <span class="a t" style="left:3px;top:2px">声音文件大小</span>
      <span class="a t" style="left:125px;top:2px">:</span><span class="a t" style="left:140px;top:2px"><span class="l">36474 </span>字节</span>
      <span class="a t" style="left:3px;top:16px">宏指令大小</span>
      <span class="a t" style="left:125px;top:16px">:</span><span class="a t" style="left:140px;top:16px"><span class="l">1744852 </span>字节</span>
      <span class="a t" style="left:3px;top:30px"><span class="l">Runtime</span></span>
      <span class="a t" style="left:125px;top:30px">:</span><span class="a t" style="left:140px;top:30px"><span class="l">9087816 </span>字节</span>
      <span class="a t" style="left:3px;top:58px">全部大小</span>
      <span class="a t" style="left:125px;top:58px">:</span><span class="a t" style="left:140px;top:58px"><span class="l">16243644 </span>字节<span class="l"> (15.49 MB)</span></span>
      <span class="a t" style="left:3px;top:72px">剩余空间</span>
      <span class="a t" style="left:125px;top:72px">:</span><span class="a t" style="left:140px;top:72px"><span class="l">7349316 </span>字节<span class="l"> (7.01 MB)</span></span>
      <span class="a t" style="left:3px;top:100px">0 错误<span class="l">, 12 </span>警告</span>
      <div class="a t" style="left:1px;top:127px;width:497px;height:14px;background:#316ac5;color:#fff;padding-left:2px">成功</div>
    </div>
    <div class="a t" style="left:17px;top:548px">双击错误信息, 可修改对应元件属性.</div>
    <div class="a btn def" style="left:14px;top:566px;width:126px;height:21px;line-height:18px;padding-right:0">编译</div>
    <div class="a btn" style="left:151px;top:566px;width:174px;height:21px;line-height:18px;padding-right:0">字体管理<span class="l">...</span></div>
  </div>
</div>

<!-- ================= MACRO DIALOG ================= -->
<div class="a" id="dlg2" style="left:676px;top:32px;width:550px;height:650px;border-radius:8px 8px 0 0;background:#0831d9;box-shadow:-1px 0 0 #0a37e0 inset">
  <div class="a" style="left:0;top:0;width:550px;height:29px;border-radius:8px 8px 0 0;background:linear-gradient(#0a50c8 0,#0a50c8 1px,#2f8dff 1.500px,#2a86fa 3px,#0c62ea 5px,#0056e2 7px,#0054e0 17px,#005cea 20px,#0066f8 23px,#0068fc 27px,#0a44b4 28px,#0a3ea8 29px)"></div>
  <div class="a" style="left:0;top:29px;width:3px;height:621px;background:linear-gradient(90deg,#0c3fd4,#1a58ec 50%,#2464f0)"></div>
  <div class="a" style="left:3px;top:29px;width:544px;height:618px;background:#f0f3fb"></div>
  <div class="a" style="left:547px;top:29px;width:3px;height:621px;background:linear-gradient(90deg,#1038c0,#0a26a8 50%,#08209a)"></div>
  <div class="a" style="left:0;top:647px;width:550px;height:3px;background:linear-gradient(#1038c0,#0a26a8 50%,#08209a)"></div>
  <div class="a" style="left:0;top:640px;width:3px;height:10px;background:linear-gradient(90deg,#0c3fd4,#1a58ec 50%,#1a50e0)"></div>
  <div class="a" style="left:7px;top:8px;font-weight:bold;font-size:13px;line-height:15px;color:#fff;white-space:pre;text-shadow:.4px 0 0 #fff,1px 1px 0 #0a2a90">宏指令</div>
  <div class="a" style="left:524px;top:5px;width:21px;height:21px;border:1px solid #fff;border-radius:3px;background:radial-gradient(circle at 30% 30%,#f0a088,#dc5a38 50%,#c23c1c)">
    <svg style="left:4px;top:4px" width="11" height="11" viewBox="0 0 11 11" stroke="#fff" stroke-width="2.200"><path d="M1 1l9 9M10 1l-9 9"/></svg></div>
  <div class="a dlg" style="left:4px;top:29px;width:542px;height:617px">
    <i class="a" style="left:-1px;top:0;width:544px;height:1px;background:#f4f6fc"></i>
    <!-- coords relative to (680,61) -->
    <div class="a gb" style="left:4px;top:16px;width:399px;height:339px"></div>
    <div class="a gl" style="left:10px;top:8px">已编译成功</div>
    <div class="a lb" style="left:11px;top:28px;width:382px;height:272px">
      <span class="a t" style="left:3px;top:2px"><span class="l id">[ID : 228]</span></span><span class="a t" style="left:119px;top:2px"><span class="l m">macro_228</span></span>
      <span class="a t" style="left:3px;top:16px"><span class="l id">[ID : 229]</span></span><span class="a t" style="left:119px;top:16px"><span class="l m">macro_229</span></span>
      <span class="a t" style="left:3px;top:30px"><span class="l id">[ID : 230]</span></span><span class="a t" style="left:119px;top:30px"><span class="l m">macro_230</span></span>
      <span class="a t" style="left:3px;top:44px"><span class="l id">[ID : 231]</span></span><span class="a t" style="left:119px;top:44px"><span class="l m">macro_231</span></span>
      <span class="a t" style="left:3px;top:58px"><span class="l id">[ID : 232]</span></span><span class="a t" style="left:119px;top:58px"><span class="l m">macro_232</span></span>
      <span class="a t" style="left:3px;top:72px"><span class="l id">[ID : 233]</span></span><span class="a t" style="left:119px;top:72px"><span class="l m">macro_233</span></span>
      <span class="a t" style="left:3px;top:86px"><span class="l id">[ID : 234]</span></span><span class="a t" style="left:119px;top:86px"><span class="l m">macro_234</span></span>
      <span class="a t" style="left:3px;top:100px"><span class="l id">[ID : 235]</span></span><span class="a t" style="left:119px;top:100px"><span class="l m">macro_235</span></span>
      <span class="a t" style="left:3px;top:114px"><span class="l id">[ID : 236]</span></span><span class="a t" style="left:119px;top:114px"><span class="l m">macro_236</span></span>
      <span class="a t" style="left:3px;top:128px"><span class="l id">[ID : 240]</span></span><span class="a t" style="left:119px;top:128px"><span class="l m">macro_240</span></span>
      <span class="a t" style="left:3px;top:142px"><span class="l id">[ID : 241]</span></span><span class="a t" style="left:119px;top:142px"><span class="l m">macro_241</span></span>
      <span class="a t" style="left:3px;top:156px"><span class="l id">[ID : 242]</span></span><span class="a t" style="left:119px;top:156px"><span class="l m">macro_242</span></span>
      <span class="a t" style="left:3px;top:170px"><span class="l id">[ID : 247]</span></span><span class="a t" style="left:119px;top:170px"><span class="l m">macro_247</span></span>
      <span class="a t" style="left:3px;top:184px"><span class="l id">[ID : 248]</span></span><span class="a t" style="left:119px;top:184px"><span class="l m">macro_248</span></span>
      <span class="a t" style="left:3px;top:198px"><span class="l id">[ID : 250]</span></span><span class="a t" style="left:119px;top:198px"><span class="l m">macro_250</span></span>
      <span class="a t" style="left:3px;top:212px"><span class="l id">[ID : 251]</span></span><span class="a t" style="left:119px;top:212px"><span class="l m">macro_251</span></span>
      <span class="a t" style="left:3px;top:226px"><span class="l id">[ID : 252]</span></span><span class="a t" style="left:119px;top:226px"><span class="l m">macro_252</span></span>
      <span class="a t" style="left:3px;top:240px"><span class="l id">[ID : 253]</span></span><span class="a t" style="left:119px;top:240px"><span class="l m">macro_253</span></span>
      <span class="a t" style="left:3px;top:254px"><span class="l id">[ID : 254]</span></span><span class="a t" style="left:119px;top:254px"><span class="l m">macro_254</span></span>
      <div class="a" style="left:363px;top:1px;width:17px;height:268px;background:linear-gradient(90deg,#f1efe8,#fefefc)"></div>
      <div class="a sbtn" style="left:363px;top:1px"><svg style="left:3px;top:4px" width="9" height="6" viewBox="0 0 9 6" fill="none" stroke="#4d6185" stroke-width="2"><path d="M.7 5.300L4.500 1.500 8.300 5.300"/></svg></div>
      <div class="a" style="left:363px;top:188px;width:17px;height:64px;background:linear-gradient(90deg,#c8d6fb,#bdcef7);border:1px solid #fff;border-radius:3px;box-shadow:0 0 0 1px #b4c6f2 inset"><i class="a" style="left:4px;top:28px;width:7px;height:7px;background:repeating-linear-gradient(#eef3ff 0,#eef3ff 1px,#8da7e8 1px,#8da7e8 2px)"></i></div>
      <div class="a sbtn" style="left:363px;top:253px"><svg style="left:3px;top:5px" width="9" height="6" viewBox="0 0 9 6" fill="none" stroke="#4d6185" stroke-width="2"><path d="M.7 .7l3.800 3.800L8.300 .7"/></svg></div>
    </div>
    <div class="a t" style="left:14px;top:307px"><span class="l">* I : </span>当<span class="l"> HMI </span>启动时即执行一次</div>
    <div class="a t" style="left:14px;top:332px"><span class="l">* P : </span>周期执行</div>
    <div class="a t" style="left:216px;top:334px"><span class="l">* S : </span>启用执行条件</div>

    <div class="a gb" style="left:4px;top:367px;width:399px;height:146px"></div>
    <div class="a gl" style="left:10px;top:360px">未完成编译</div>
    <div class="a lb" style="left:11px;top:380px;width:382px;height:124px"></div>

    <div class="a btn" style="left:417px;top:29px;width:115px">新增<span class="l">...</span></div>
    <div class="a btn" style="left:417px;top:55px;width:115px">删除</div>
    <div class="a btn" style="left:417px;top:94px;width:115px">编辑</div>
    <div class="a btn" style="left:417px;top:120px;width:115px">复制</div>
    <div class="a btn" style="left:417px;top:146px;width:115px">粘贴</div>
    <div class="a btn" style="left:417px;top:185px;width:115px">导出<span class="l">...</span></div>
    <div class="a btn" style="left:417px;top:211px;width:115px">导入<span class="l">...</span></div>
    <div class="a btn" style="left:417px;top:251px;width:115px">宏指令库<span class="l">...</span></div>
    <div class="a btn" style="left:417px;top:278px;width:115px">说明</div>
    <div class="a btn" style="left:417px;top:481px;width:115px">离开</div>

    <div class="a gb" style="left:4px;top:520px;width:529px;height:39px"></div>
    <div class="a btn" style="left:12px;top:528px;width:138px;height:21px;line-height:18px">密码设置<span class="l">...</span></div>

    <div class="a gb" style="left:4px;top:565px;width:529px;height:48px"></div>
    <div class="a chk" style="left:11px;top:582px"></div>
    <div class="a t" style="left:27px;top:577px">在宏指令中地址变量可使用<span class="l"> [DDDDdd] </span>地址格式替代<span class="l"> [DDDDh] </span>部分<span class="l"> 16 </span>进制地址格式的编</div>
    <div class="a t" style="left:27px;top:591px">辑功能<span class="l"> (i.e. SetData, GetData, ...)</span></div>
  </div>
</div>

</body>
</html>
